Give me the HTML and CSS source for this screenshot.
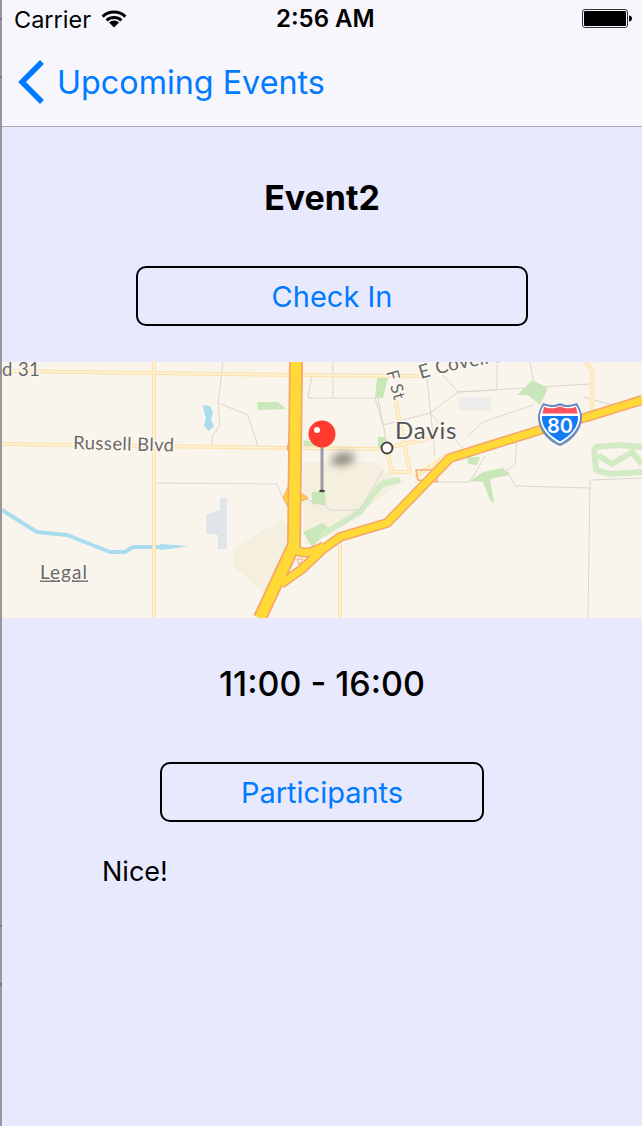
FILE: index.html
```html
<!DOCTYPE html>
<html lang="en">
<head>
<meta charset="utf-8">
<title>Event2</title>
<link rel="stylesheet" href="styles.css">
</head>
<body>
<div class="page">
  <header class="topbar">
    <div class="status">
      <div class="status-left">
        <span class="carrier">Carrier</span>
        <svg class="wifi" viewBox="0 0 26 18" width="26" height="18">
          <path class="wifi-arc" d="M1.6 6.6A16.5 16.5 0 0 1 24.4 6.6"/>
          <path class="wifi-arc" d="M5.6 10.4A11 11 0 0 1 20.4 10.4"/>
          <path class="wifi-tip" d="M8 12.6A7 7 0 0 1 18 12.6L13 17.6Z"/>
        </svg>
      </div>
      <span class="clock">2:56 AM</span>
      <svg class="battery" viewBox="0 0 50 20" width="50" height="20">
        <rect class="battery-shell" x="0.5" y="0.5" width="45" height="18" rx="2.5"/>
        <rect class="battery-fill" x="2" y="2" width="42" height="15" rx="1.2"/>
        <path class="battery-fill" d="M47 6.500C49 6.500 50 8 50 9.500C50 11 49 12.500 47 12.500Z"/>
      </svg>
    </div>
    <nav class="navbar">
      <svg class="chevron" viewBox="0 0 30 44" width="30" height="44">
        <path d="M25 4L7 22L25 40"/>
      </svg>
      <span class="nav-title">Upcoming Events</span>
    </nav>
  </header>
  <main class="content">
    <h1 class="event-title">Event2</h1>
    <button class="outline-btn checkin" type="button">Check In</button>
    <svg class="map" viewBox="2 362 640 256" width="640" height="256">
      <defs>
        <filter id="blur" x="-60%" y="-100%" width="220%" height="300%"><feGaussianBlur stdDeviation="4"/></filter>
        <path id="covell" d="M421 379Q470 364 535 358"/>
      </defs>
      <rect class="m-land" x="2" y="362" width="640" height="256"/>
      <path class="m-campus" d="M233 548L283 519L290 530L292 552L277 584L262 592L233 566Z"/>
      <path class="m-campus" d="M302 462L376 462L383 470L403 481L366 508L330 530L305 545Z"/>
      <path class="m-airport" d="M220 498L227 498L227 549L218 549L218 535L206 533L206 515L220 510Z"/>
      <rect class="m-building" x="459" y="397" width="32" height="13"/>
      <path class="m-water-fill" d="M203 405L210 406L213 413L211 420L214 426L209 431L204 426L206 418L204 412Z"/>
      <path class="m-river" d="M2 510L13 517L37 532L67 535L110 552L125 552L133 547L163 547"/>
      <path class="m-water-fill" d="M160 544L175 545L188 546L170 549L160 550Z"/>

      <g class="m-green">
        <path d="M257 402L278 402L286 409L258 410Z"/>
        <path d="M303 440L316 442L316 446L304 446Z"/>
        <path d="M312 492L325 491L326 505L312 504Z"/>
        <path d="M303 532L323 523L330 530L312 547Z"/>
        <path d="M377 378L388 378L383 398L375 398Z"/>
        <path d="M378 437L386 437L385 448L378 450Z"/>
        <path d="M532 380L548 388L540 405L528 395L517 395Z"/>
        <path d="M467 457L480 457L477 465L468 464Z"/>
        <path d="M470 481L483 472L503 468L510 475L490 479L494 503L490 500L483 482Z"/>
      </g>
      <g class="m-green-line">
        <path d="M320 536L360 512L375 492L382 484L400 480"/>
        <path d="M594 447L618 445L642 447"/>
        <path d="M594 447L596 470L610 474L642 472"/>
        <path d="M598 455L612 464L632 452L642 464"/>
      </g>

      <g class="m-border">
        <path d="M223 362L218 403L220 425L212 437L212 446"/>
        <path d="M218 403L248 415L258 447"/>
        <path d="M157 483L277 484L283 498"/>
        <path d="M312 375L308 398L330 398L375 398L383 425L430 413L458 392L443 375"/>
        <path d="M333 362L333 398"/>
        <path d="M378 398L388 450"/>
        <path d="M427 378L435 455"/>
        <path d="M458 392L497 390L497 362"/>
        <path d="M458 392L590 384"/>
        <path d="M530 362L533 380"/>
        <path d="M430 413L463 448"/>
        <path d="M467 437L483 422L533 405"/>
        <path d="M438 482L470 482L477 470L485 456"/>
        <path d="M517 438L515 465L507 470L515 486L590 488"/>
        <path d="M590 480L588 618"/>
        <path d="M592 480L642 478"/>
        <path d="M583 397L613 405L642 395"/>
        <path d="M302 498L325 505L330 510L360 510L383 470"/>
        <path d="M342 526L360 510"/>
      </g>

      <g class="m-road-out">
        <path d="M2 371L287 375L420 376"/>
        <path d="M154 362L154 618"/>
        <path d="M2 444L290 448L382 449L430 438"/>
        <path d="M340 532L340 618"/>
        <path d="M585 362L592 370L592 422"/>
        <path d="M395 398L410 472L392 472L388 455"/>
        <path d="M415 477L447 455"/>
      </g>
      <g class="m-road-in">
        <path d="M2 371L287 375L420 376"/>
        <path d="M154 362L154 618"/>
        <path d="M2 444L290 448L382 449L430 438"/>
        <path d="M340 532L340 618"/>
        <path d="M585 362L592 370L592 422"/>
        <path d="M395 398L410 472L392 472L388 455"/>
        <path d="M415 477L447 455"/>
      </g>

      <path class="m-flare" d="M288 487L283 498L288 507L296 504L308 498L298 491Z"/>
      <path class="m-flare" d="M290 438L287 448L290 456Z"/>
      <path class="m-flare-thin" d="M416 470L436 470L437 482L418 480Z"/>

      <path class="m-hw-out m-hw-branch" d="M294 548Q304 558 324 546"/>
      <path class="m-hw-out m-hw-branch" d="M281 584L302 569L322 550L340 537L387 523L450 458L540 430L587 417L642 400"/>
      <path class="m-hw-out" d="M296 362L294 545L260 618"/>
      <path class="m-hw-in m-hw-branch" d="M294 548Q304 558 324 546"/>
      <path class="m-hw-in m-hw-branch" d="M281 584L302 569L322 550L340 537L387 523L450 458L540 430L587 417L642 400"/>
      <path class="m-hw-in" d="M296 362L294 545L260 618"/>
      <path class="m-islet" d="M297 559L303 559L299 565Z"/>

      <g class="m-labels">
        <text class="m-label" x="2" y="376" font-size="18.500">d 31</text>
        <text class="m-label" x="73" y="449" font-size="18.500" transform="rotate(1.500 73 449)">Russell Blvd</text>
        <text class="m-label m-davis" x="395" y="439" font-size="24">Davis</text>
        <text class="m-label" x="386" y="372" font-size="17" transform="rotate(74 386 372)">F St</text>
        <text class="m-label" font-size="19"><textPath href="#covell">E Covell Dr</textPath></text>
        <text class="m-label m-legal" x="40" y="579" font-size="19">Legal</text>
      </g>
      <circle class="m-city" cx="387" cy="448" r="5.500"/>

      <path class="m-shield-edge" d="M543 403C549 405 554 406 560 403C566 406 571 405 577 403C579 406 581 411 582 415C583 428 573 441 560 446C547 441 537 428 538 415C539 411 541 406 543 403Z"/>
      <path class="m-shield-white" d="M544 405.500C549 407 554 408 560 405.500C566 408 571 407 576 405.500C578 408 579 411 580 415C581 427 571 438 560 443.500C549 438 539 427 540 415C541 411 542 408 544 405.500Z"/>
      <path class="m-shield-red" d="M544 407C549 408.500 554 409 560 406.500C566 409 571 408.500 576 407L577.500 413.500L542.500 413.500Z"/>
      <path class="m-shield-blue" d="M542 416L578 416C579 427 570 436 560 441.500C550 436 541 427 542 416Z"/>
      <text class="m-shield-num" x="560" y="433" font-size="20">80</text>

      <ellipse class="m-shadow" cx="343" cy="459" rx="12" ry="6" transform="rotate(-10 343 459)" filter="url(#blur)"/>
      <rect class="m-stem" x="320.500" y="447" width="3" height="44"/>
      <ellipse class="m-stem-base" cx="322" cy="491" rx="3" ry="1.300"/>
      <circle class="m-pin" cx="322" cy="434" r="13.500"/>
      <circle class="m-pin-glint" cx="317" cy="430" r="3"/>
    </svg>
    <p class="event-time">11:00 - 16:00</p>
    <button class="outline-btn participants" type="button">Participants</button>
    <p class="note">Nice!</p>
  </main>
</div>
</body>
</html>
```
FILE: styles.css
```css
* { box-sizing: border-box; }
html, body { margin: 0; padding: 0; }
body {
  width: 642px;
  height: 1126px;
  overflow: hidden;
  font-family: Inter, "Liberation Sans", sans-serif;
  background: #e9e9fe;
}
.page {
  width: 642px;
  height: 1126px;
  border-left: 2px solid #98989c;
  border-image: linear-gradient(to bottom,
    #98989c 0 20px, #77777c 20px 22px, #98989c 22px 78px, #77777c 78px 80px,
    #98989c 80px 924px, #77777c 924px 926px, #98989c 926px 982px, #77777c 982px 984px,
    #98989c 984px) 2;
  display: flex;
  flex-direction: column;
}
.topbar {
  height: 127px;
  flex: none;
  background: #f6f6fc;
  border-bottom: 1px solid #a9a9b2;
}
.status {
  height: 40px;
  padding: 0 10px 2px 12px;
  display: flex;
  align-items: center;
  justify-content: space-between;
  position: relative;
}
.status-left { display: flex; align-items: center; gap: 10px; }
.carrier { font-size: 23.500px; color: #000; }
.wifi { display: block; fill: #000; }
.wifi-arc { fill: none; stroke: #000; stroke-width: 3; }
.wifi-tip { fill: #000; }
.clock {
  position: absolute;
  left: 274px;
  top: 4px;
  font-size: 24px;
  font-weight: 600;
  color: #000;
}
.battery { display: block; margin-top: -1px; }
.battery-shell { fill: none; stroke: #333; stroke-width: 1; }
.battery-fill { fill: #000; }
.navbar {
  height: 86px;
  padding: 0 0 2px 13px;
  display: flex;
  align-items: center;
  gap: 12px;
}
.chevron { display: block; flex: none; margin-top: -1px; }
.chevron path { fill: none; stroke: #007aff; stroke-width: 5.500; stroke-linecap: square; }
.nav-title { font-size: 32.300px; color: #007aff; white-space: nowrap; }
.content {
  flex: 1;
  display: flex;
  flex-direction: column;
  align-items: flex-start;
}
.event-title {
  margin: 52px 0 0;
  align-self: center;
  height: 38px;
  line-height: 38px;
  font-size: 34px;
  font-weight: 700;
  color: #000;
}
.outline-btn {
  display: block;
  height: 60px;
  padding: 0;
  border: 2px solid #000;
  border-radius: 10px;
  background: transparent;
  color: #007aff;
  font-family: inherit;
  font-size: 29px;
}
.checkin { width: 392px; margin: 49px 0 0 134px; }
.map { display: block; flex: none; margin-top: 36px; }
.event-time {
  margin: 45px 0 0;
  align-self: center;
  height: 42px;
  line-height: 42px;
  font-size: 34px;
  font-weight: 500;
  color: #000;
}
.participants { width: 324px; margin: 57px 0 0 158px; }
.note {
  margin: 33px 0 0 100px;
  font-size: 27px;
  line-height: 34px;
  color: #000;
}

.m-land { fill: #f9f5ed; }
.m-campus { fill: #f5efdf; }
.m-airport { fill: #dfe5e9; }
.m-building { fill: #ececea; }
.m-water-fill { fill: #a9dcee; }
.m-river { fill: none; stroke: #a9dcee; stroke-width: 4; stroke-linejoin: round; }
.m-green path { fill: #c9e7b9; }
.m-green-line path { fill: none; stroke: #d3ebc5; stroke-width: 6; stroke-linejoin: round; }
.m-border path { fill: none; stroke: #d9d6cf; stroke-width: 1; }
.m-road-out path { fill: none; stroke: #fde3ae; stroke-width: 4; }
.m-road-in path { fill: none; stroke: #fff3d8; stroke-width: 1.500; }
.m-flare { fill: #ffd23f; stroke: #f5a76a; stroke-width: 1; }
.m-flare-thin { fill: none; stroke: #f5b070; stroke-width: 1.500; }
.m-hw-out { fill: none; stroke: #f5a76a; stroke-width: 14; stroke-linejoin: round; }
.m-hw-in { fill: none; stroke: #ffd935; stroke-width: 10.500; stroke-linejoin: round; }
.m-hw-out.m-hw-branch { stroke-width: 10; }
.m-hw-in.m-hw-branch { stroke-width: 7; }
.m-islet { fill: #f9f5ed; stroke: #f5a76a; stroke-width: 1; }
.m-labels { font-family: Lato, "Noto Sans", sans-serif; }
.m-label {
  fill: #6a6966;
  stroke: #fbf8f2;
  stroke-width: 3px;
  paint-order: stroke;
  letter-spacing: 0.4px;
}
.m-davis { fill: #555452; letter-spacing: 0.8px; }
.m-legal { text-decoration: underline; letter-spacing: 1px; }
.m-city { fill: #fff; stroke: #474747; stroke-width: 2; }
.m-shield-edge { fill: #6c8cc0; }
.m-shield-white { fill: #fff; }
.m-shield-red { fill: #f4555c; }
.m-shield-blue { fill: #137cf5; }
.m-shield-num {
  fill: #fff;
  font-family: Inter, "Liberation Sans", sans-serif;
  font-weight: 600;
  text-anchor: middle;
}
.m-shadow { fill: #6d675c; opacity: 0.8; }
.m-stem { fill: #9b9ca8; }
.m-stem-base { fill: #444; }
.m-pin { fill: #ff3b30; }
.m-pin-glint { fill: #fff; }
```
